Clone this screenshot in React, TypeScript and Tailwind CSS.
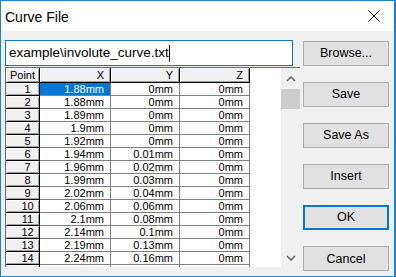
const rows = [
  ['1', '1.88mm', '0mm', '0mm'],
  ['2', '1.88mm', '0mm', '0mm'],
  ['3', '1.89mm', '0mm', '0mm'],
  ['4', '1.9mm', '0mm', '0mm'],
  ['5', '1.92mm', '0mm', '0mm'],
  ['6', '1.94mm', '0.01mm', '0mm'],
  ['7', '1.96mm', '0.02mm', '0mm'],
  ['8', '1.99mm', '0.03mm', '0mm'],
  ['9', '2.02mm', '0.04mm', '0mm'],
  ['10', '2.06mm', '0.06mm', '0mm'],
  ['11', '2.1mm', '0.08mm', '0mm'],
  ['12', '2.14mm', '0.1mm', '0mm'],
  ['13', '2.19mm', '0.13mm', '0mm'],
  ['14', '2.24mm', '0.16mm', '0mm'],
  ['15', '2.29mm', '0.2mm', '0mm'],
];

const fixedCell =
  'shrink-0 bg-[#f0f0f0] border-r border-b border-black shadow-[inset_1px_1px_0_#fff,inset_-1px_-1px_0_#a0a0a0]';
const dataCell = 'shrink-0 border-r border-b border-[#808080] text-right pr-[6px]';

const Chevron = ({ down }: { down?: boolean }) => (
  <svg width="10" height="6" viewBox="0 0 10 6" className="text-[#606060]">
    <path
      d={down ? 'M1 1 L5 5 L9 1' : 'M1 5 L5 1 L9 5'}
      fill="none"
      stroke="currentColor"
      strokeWidth="1.5"
    />
  </svg>
);

const DialogButton = ({ label, primary }: { label: string; primary?: boolean }) => (
  <button
    className={
      primary
        ? 'h-[25px] w-[86px] bg-[#e1e1e1] border-2 border-[#0078d7] text-[12.5px] text-black'
        : 'h-[25px] w-[86px] bg-[#e1e1e1] border border-[#adadad] text-[12.5px] text-black'
    }
  >
    {label}
  </button>
);

const App = () => {
  return (
    <div className="w-[396px] h-[277px] flex flex-col border-t border-l border-b border-r-2 border-[#1883d7] bg-[#f0f0f0] font-['Liberation_Sans',Arial,sans-serif] overflow-hidden">
      <div className="h-[30px] shrink-0 bg-white flex items-center justify-between pl-[4px]">
        <span className="text-[14px] text-black mt-[2px]">Curve File</span>
        <svg width="12" height="12" viewBox="0 0 12 12" className="mr-[14px]">
          <path d="M0.5 0.5 L11.5 11.5 M11.5 0.5 L0.5 11.5" stroke="#000" strokeWidth="1" />
        </svg>
      </div>

      <div className="flex flex-1 min-h-0 pl-[4px]">
        <div className="w-[295px] shrink-0 pt-[9px] flex flex-col">
          <div className="w-[288px] h-[26px] border border-[#0078d7] bg-white flex items-center pl-[3px] text-[13.5px] text-black">
            <span>example\involute_curve.txt</span>
            <span className="w-[1px] h-[17px] bg-black" />
          </div>

          <div className="mt-[1px] h-[200px] flex border-t border-l border-[#696969] bg-white overflow-hidden text-[11px] text-black">
            <div className="w-[244px] shrink-0 flex flex-col">
              <div className="flex h-[15px] shrink-0 leading-[14px]">
                <div className={`${fixedCell} w-[34px] text-center`}>Point</div>
                <div className={`${fixedCell} w-[71px] text-right pr-[6px]`}>X</div>
                <div className={`${fixedCell} w-[69px] text-right pr-[6px]`}>Y</div>
                <div className={`${fixedCell} w-[70px] text-right pr-[6px]`}>Z</div>
              </div>
              {rows.map((r, i) => (
                <div key={r[0]} className="flex h-[13px] shrink-0 leading-[13px]">
                  <div className={`${fixedCell} w-[34px] text-center pl-[10px]`}>{r[0]}</div>
                  <div
                    className={`${dataCell} w-[71px] ${i === 0 ? 'bg-[#0078d7] text-white' : ''}`}
                  >
                    {r[1]}
                  </div>
                  <div className={`${dataCell} w-[69px]`}>{r[2]}</div>
                  <div className={`${dataCell} w-[70px]`}>{r[3]}</div>
                </div>
              ))}
            </div>
            <div className="w-[31px] shrink-0 bg-white" />
            <div className="w-[19px] shrink-0 bg-[#f0f0f0] flex flex-col items-center">
              <div className="h-[21px] w-full flex items-center justify-center">
                <Chevron />
              </div>
              <div className="h-[20px] w-full bg-[#cdcdcd]" />
              <div className="flex-1" />
              <div className="h-[18px] w-full flex items-center justify-center">
                <Chevron down />
              </div>
            </div>
          </div>
        </div>

        <div className="ml-[3px] pt-[10px] flex flex-col">
          <DialogButton label="Browse..." />
          <div className="mt-[15px]">
            <DialogButton label="Save" />
          </div>
          <div className="mt-[15px]">
            <DialogButton label="Save As" />
          </div>
          <div className="mt-[15px]">
            <DialogButton label="Insert" />
          </div>
          <div className="mt-[15px]">
            <DialogButton label="OK" primary />
          </div>
          <div className="mt-[16px]">
            <DialogButton label="Cancel" />
          </div>
        </div>
      </div>
    </div>
  );
};

export default App;
